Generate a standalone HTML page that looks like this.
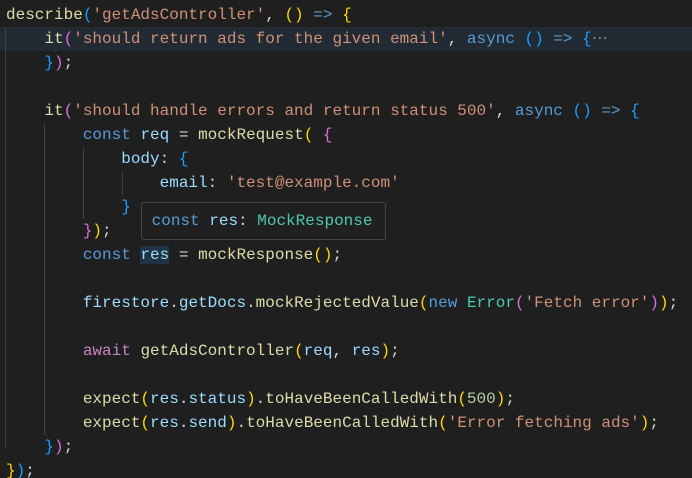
<!DOCTYPE html>
<html><head><meta charset="utf-8"><style>
html,body{margin:0;padding:0;background:#1f1f1f;width:692px;height:478px;overflow:hidden}
.ed{position:relative;width:692px;height:478px;font-family:"Liberation Mono",monospace;font-size:16px;color:#d4d4d4}
.l{position:absolute;left:6px;height:24px;line-height:24px;white-space:pre}
.hl{position:absolute;left:0;top:27px;width:692px;height:24px;background:#222a33}
.g{position:absolute;width:1px;background:#404040}
.f{color:#DCDCAA}.s{color:#CE9178}.k{color:#569CD6}.v{color:#9CDCFE}.t{color:#4EC9B0}.p{color:#C586C0}.n{color:#B5CEA8}
.b1{color:#FFD700}.b2{color:#DA70D6}.b3{color:#179FFF}.d{color:#d4d4d4}
.tip{position:absolute;left:141px;top:202px;width:243px;height:36px;background:#202020;border:1px solid #454545;border-radius:3px;font-family:"Liberation Mono",monospace;font-size:16px;line-height:36px;white-space:pre;box-sizing:content-box}
.rs{background:#1f3345}
</style></head><body><div class="ed">
<div class="hl"></div>
<div class="g" style="left:5px;top:27px;height:420px"></div>
<div class="g" style="left:44px;top:123px;height:312px"></div>
<div class="g" style="left:83px;top:147px;height:72px"></div>
<div class="g" style="left:122px;top:171px;height:24px"></div>
<div class="l" style="top:3px"><span class="f">describe</span><span class="b3">(</span><span class="s">'getAdsController'</span>, <span class="b1">()</span> <span class="k">=&gt;</span> <span class="b1">{</span></div>
<div class="l" style="top:27px">    <span class="f">it</span><span class="b2">(</span><span class="s">'should return ads for the given email'</span>, <span class="k">async</span> <span class="b3">()</span> <span class="k">=&gt;</span> <span class="b3">{</span><span style="color:#8a8a8a">⋯</span></div>
<div class="l" style="top:51px">    <span class="b3">}</span><span class="b2">)</span>;</div>
<div class="l" style="top:99px">    <span class="f">it</span><span class="b2">(</span><span class="s">'should handle errors and return status 500'</span>, <span class="k">async</span> <span class="b3">()</span> <span class="k">=&gt;</span> <span class="b3">{</span></div>
<div class="l" style="top:123px">        <span class="k">const</span> <span class="v">req</span> = <span class="f">mockRequest</span><span class="b1">(</span> <span class="b2">{</span></div>
<div class="l" style="top:147px">            <span class="v">body</span>: <span class="b3">{</span></div>
<div class="l" style="top:171px">                <span class="v">email</span>: <span class="s">'test@example.com'</span></div>
<div class="l" style="top:195px">            <span class="b3">}</span></div>
<div class="l" style="top:219px">        <span class="b2">}</span><span class="b1">)</span>;</div>
<div class="l" style="top:243px">        <span class="k">const</span> <span class="v rs">res</span> = <span class="f">mockResponse</span><span class="b1">()</span>;</div>
<div class="l" style="top:291px">        <span class="v">firestore</span>.<span class="v">getDocs</span>.<span class="f">mockRejectedValue</span><span class="b1">(</span><span class="k">new</span> <span class="t">Error</span><span class="b2">(</span><span class="s">'Fetch error'</span><span class="b2">)</span><span class="b1">)</span>;</div>
<div class="l" style="top:339px">        <span class="p">await</span> <span class="f">getAdsController</span><span class="b1">(</span><span class="v">req</span>, <span class="v">res</span><span class="b1">)</span>;</div>
<div class="l" style="top:387px">        <span class="f">expect</span><span class="b1">(</span><span class="v">res</span>.<span class="v">status</span><span class="b1">)</span>.<span class="f">toHaveBeenCalledWith</span><span class="b1">(</span><span class="n">500</span><span class="b1">)</span>;</div>
<div class="l" style="top:411px">        <span class="f">expect</span><span class="b1">(</span><span class="v">res</span>.<span class="v">send</span><span class="b1">)</span>.<span class="f">toHaveBeenCalledWith</span><span class="b1">(</span><span class="s">'Error fetching ads'</span><span class="b1">)</span>;</div>
<div class="l" style="top:435px">    <span class="b3">}</span><span class="b2">)</span>;</div>
<div class="l" style="top:459px"><span class="b1">}</span><span class="b3">)</span>;</div>
<div class="tip"> <span class="k">const</span> <span class="v">res</span>: <span class="t">MockResponse</span></div>
</div></body></html>
